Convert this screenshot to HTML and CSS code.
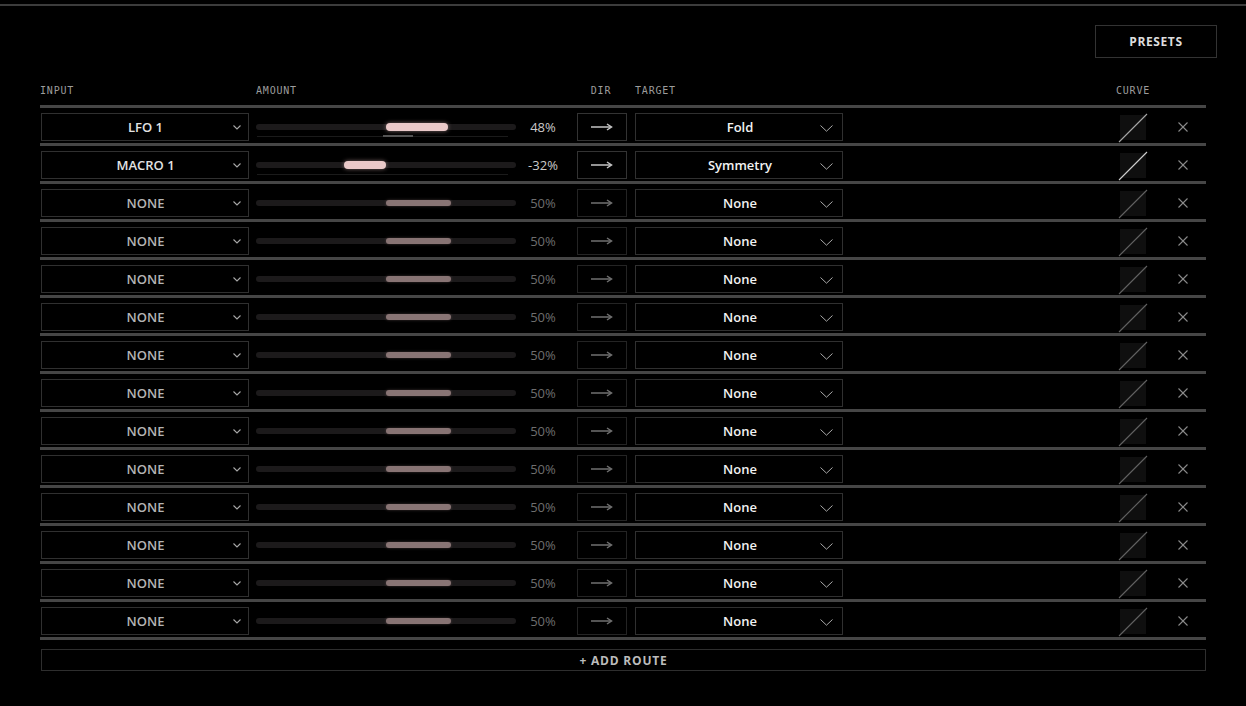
FILE: index.html
```html
<!DOCTYPE html>
<html lang="en">
<head>
<meta charset="utf-8">
<title>Mod Matrix</title>
<link rel="stylesheet" href="styles.css">
</head>
<body>
<div class="app">
  <div class="toolbar">
    <button class="btn-presets">PRESETS</button>
  </div>

  <div class="matrix">
    <div class="grid head">
      <div class="lbl">INPUT</div>
      <div class="lbl">AMOUNT</div>
      <div></div>
      <div class="lbl center">DIR</div>
      <div class="lbl">TARGET</div>
      <div></div>
      <div class="lbl center">CURVE</div>
      <div></div>
    </div>

    <div class="rows">
      <!-- route 1 -->
      <div class="grid route active">
        <div class="sel input"><span>LFO 1</span><svg class="chev-s" width="8" height="5" viewBox="0 0 8 5"><polyline points="0.5,0.5 4,4 7.5,0.5"/></svg></div>
        <div class="slider"><div class="track"></div><div class="fill" style="left:50%;width:24%"></div><div class="under"></div><div class="mark"></div></div>
        <div class="pct">48%</div>
        <div class="dir"><svg width="22" height="8" viewBox="0 0 22 8"><line x1="0" y1="4" x2="20" y2="4"/><polyline points="16,1 20.5,4 16,7"/></svg></div>
        <div class="sel target"><span>Fold</span><svg class="chev-l" width="13" height="7" viewBox="0 0 13 7"><polyline points="0.5,0.5 6.5,6.2 12.5,0.5"/></svg></div>
        <div></div>
        <div class="curve c1"><svg viewBox="0 0 26 25"><line x1="-1" y1="27" x2="27" y2="-1"/></svg></div>
        <div class="del"><svg width="10" height="10" viewBox="0 0 10 10"><line x1="0.5" y1="0.5" x2="9.5" y2="9.5"/><line x1="9.5" y1="0.5" x2="0.5" y2="9.5"/></svg></div>
      </div>
      <!-- route 2 -->
      <div class="grid route active">
        <div class="sel input"><span>MACRO 1</span><svg class="chev-s" width="8" height="5" viewBox="0 0 8 5"><polyline points="0.5,0.5 4,4 7.5,0.5"/></svg></div>
        <div class="slider"><div class="track"></div><div class="fill" style="left:34%;width:16%"></div><div class="under"></div></div>
        <div class="pct">-32%</div>
        <div class="dir"><svg width="22" height="8" viewBox="0 0 22 8"><line x1="0" y1="4" x2="20" y2="4"/><polyline points="16,1 20.5,4 16,7"/></svg></div>
        <div class="sel target"><span>Symmetry</span><svg class="chev-l" width="13" height="7" viewBox="0 0 13 7"><polyline points="0.5,0.5 6.5,6.2 12.5,0.5"/></svg></div>
        <div></div>
        <div class="curve c2"><svg viewBox="0 0 26 25"><line x1="-1" y1="27" x2="27" y2="-1"/></svg></div>
        <div class="del"><svg width="10" height="10" viewBox="0 0 10 10"><line x1="0.5" y1="0.5" x2="9.5" y2="9.5"/><line x1="9.5" y1="0.5" x2="0.5" y2="9.5"/></svg></div>
      </div>
      <!-- route 3 -->
      <div class="grid route">
        <div class="sel input"><span>NONE</span><svg class="chev-s" width="8" height="5" viewBox="0 0 8 5"><polyline points="0.5,0.5 4,4 7.5,0.5"/></svg></div>
        <div class="slider"><div class="track"></div><div class="fill" style="left:50%;width:25%"></div></div>
        <div class="pct">50%</div>
        <div class="dir"><svg width="22" height="8" viewBox="0 0 22 8"><line x1="0" y1="4" x2="20" y2="4"/><polyline points="16,1 20.5,4 16,7"/></svg></div>
        <div class="sel target"><span>None</span><svg class="chev-l" width="13" height="7" viewBox="0 0 13 7"><polyline points="0.5,0.5 6.5,6.2 12.5,0.5"/></svg></div>
        <div></div>
        <div class="curve"><svg viewBox="0 0 26 25"><line x1="-1" y1="27" x2="27" y2="-1"/></svg></div>
        <div class="del"><svg width="10" height="10" viewBox="0 0 10 10"><line x1="0.5" y1="0.5" x2="9.5" y2="9.5"/><line x1="9.5" y1="0.5" x2="0.5" y2="9.5"/></svg></div>
      </div>
      <!-- route 4 -->
      <div class="grid route">
        <div class="sel input"><span>NONE</span><svg class="chev-s" width="8" height="5" viewBox="0 0 8 5"><polyline points="0.5,0.5 4,4 7.5,0.5"/></svg></div>
        <div class="slider"><div class="track"></div><div class="fill" style="left:50%;width:25%"></div></div>
        <div class="pct">50%</div>
        <div class="dir"><svg width="22" height="8" viewBox="0 0 22 8"><line x1="0" y1="4" x2="20" y2="4"/><polyline points="16,1 20.5,4 16,7"/></svg></div>
        <div class="sel target"><span>None</span><svg class="chev-l" width="13" height="7" viewBox="0 0 13 7"><polyline points="0.5,0.5 6.5,6.2 12.5,0.5"/></svg></div>
        <div></div>
        <div class="curve"><svg viewBox="0 0 26 25"><line x1="-1" y1="27" x2="27" y2="-1"/></svg></div>
        <div class="del"><svg width="10" height="10" viewBox="0 0 10 10"><line x1="0.5" y1="0.5" x2="9.5" y2="9.5"/><line x1="9.5" y1="0.5" x2="0.5" y2="9.5"/></svg></div>
      </div>
      <!-- route 5 -->
      <div class="grid route">
        <div class="sel input"><span>NONE</span><svg class="chev-s" width="8" height="5" viewBox="0 0 8 5"><polyline points="0.5,0.5 4,4 7.5,0.5"/></svg></div>
        <div class="slider"><div class="track"></div><div class="fill" style="left:50%;width:25%"></div></div>
        <div class="pct">50%</div>
        <div class="dir"><svg width="22" height="8" viewBox="0 0 22 8"><line x1="0" y1="4" x2="20" y2="4"/><polyline points="16,1 20.5,4 16,7"/></svg></div>
        <div class="sel target"><span>None</span><svg class="chev-l" width="13" height="7" viewBox="0 0 13 7"><polyline points="0.5,0.5 6.5,6.2 12.5,0.5"/></svg></div>
        <div></div>
        <div class="curve"><svg viewBox="0 0 26 25"><line x1="-1" y1="27" x2="27" y2="-1"/></svg></div>
        <div class="del"><svg width="10" height="10" viewBox="0 0 10 10"><line x1="0.5" y1="0.5" x2="9.5" y2="9.5"/><line x1="9.5" y1="0.5" x2="0.5" y2="9.5"/></svg></div>
      </div>
      <!-- route 6 -->
      <div class="grid route">
        <div class="sel input"><span>NONE</span><svg class="chev-s" width="8" height="5" viewBox="0 0 8 5"><polyline points="0.5,0.5 4,4 7.5,0.5"/></svg></div>
        <div class="slider"><div class="track"></div><div class="fill" style="left:50%;width:25%"></div></div>
        <div class="pct">50%</div>
        <div class="dir"><svg width="22" height="8" viewBox="0 0 22 8"><line x1="0" y1="4" x2="20" y2="4"/><polyline points="16,1 20.5,4 16,7"/></svg></div>
        <div class="sel target"><span>None</span><svg class="chev-l" width="13" height="7" viewBox="0 0 13 7"><polyline points="0.5,0.5 6.5,6.2 12.5,0.5"/></svg></div>
        <div></div>
        <div class="curve"><svg viewBox="0 0 26 25"><line x1="-1" y1="27" x2="27" y2="-1"/></svg></div>
        <div class="del"><svg width="10" height="10" viewBox="0 0 10 10"><line x1="0.5" y1="0.5" x2="9.5" y2="9.5"/><line x1="9.5" y1="0.5" x2="0.5" y2="9.5"/></svg></div>
      </div>
      <!-- route 7 -->
      <div class="grid route">
        <div class="sel input"><span>NONE</span><svg class="chev-s" width="8" height="5" viewBox="0 0 8 5"><polyline points="0.5,0.5 4,4 7.5,0.5"/></svg></div>
        <div class="slider"><div class="track"></div><div class="fill" style="left:50%;width:25%"></div></div>
        <div class="pct">50%</div>
        <div class="dir"><svg width="22" height="8" viewBox="0 0 22 8"><line x1="0" y1="4" x2="20" y2="4"/><polyline points="16,1 20.5,4 16,7"/></svg></div>
        <div class="sel target"><span>None</span><svg class="chev-l" width="13" height="7" viewBox="0 0 13 7"><polyline points="0.5,0.5 6.5,6.2 12.5,0.5"/></svg></div>
        <div></div>
        <div class="curve"><svg viewBox="0 0 26 25"><line x1="-1" y1="27" x2="27" y2="-1"/></svg></div>
        <div class="del"><svg width="10" height="10" viewBox="0 0 10 10"><line x1="0.5" y1="0.5" x2="9.5" y2="9.5"/><line x1="9.5" y1="0.5" x2="0.5" y2="9.5"/></svg></div>
      </div>
      <!-- route 8 -->
      <div class="grid route">
        <div class="sel input"><span>NONE</span><svg class="chev-s" width="8" height="5" viewBox="0 0 8 5"><polyline points="0.5,0.5 4,4 7.5,0.5"/></svg></div>
        <div class="slider"><div class="track"></div><div class="fill" style="left:50%;width:25%"></div></div>
        <div class="pct">50%</div>
        <div class="dir"><svg width="22" height="8" viewBox="0 0 22 8"><line x1="0" y1="4" x2="20" y2="4"/><polyline points="16,1 20.5,4 16,7"/></svg></div>
        <div class="sel target"><span>None</span><svg class="chev-l" width="13" height="7" viewBox="0 0 13 7"><polyline points="0.5,0.5 6.5,6.2 12.5,0.5"/></svg></div>
        <div></div>
        <div class="curve"><svg viewBox="0 0 26 25"><line x1="-1" y1="27" x2="27" y2="-1"/></svg></div>
        <div class="del"><svg width="10" height="10" viewBox="0 0 10 10"><line x1="0.5" y1="0.5" x2="9.5" y2="9.5"/><line x1="9.5" y1="0.5" x2="0.5" y2="9.5"/></svg></div>
      </div>
      <!-- route 9 -->
      <div class="grid route">
        <div class="sel input"><span>NONE</span><svg class="chev-s" width="8" height="5" viewBox="0 0 8 5"><polyline points="0.5,0.5 4,4 7.5,0.5"/></svg></div>
        <div class="slider"><div class="track"></div><div class="fill" style="left:50%;width:25%"></div></div>
        <div class="pct">50%</div>
        <div class="dir"><svg width="22" height="8" viewBox="0 0 22 8"><line x1="0" y1="4" x2="20" y2="4"/><polyline points="16,1 20.5,4 16,7"/></svg></div>
        <div class="sel target"><span>None</span><svg class="chev-l" width="13" height="7" viewBox="0 0 13 7"><polyline points="0.5,0.5 6.5,6.2 12.5,0.5"/></svg></div>
        <div></div>
        <div class="curve"><svg viewBox="0 0 26 25"><line x1="-1" y1="27" x2="27" y2="-1"/></svg></div>
        <div class="del"><svg width="10" height="10" viewBox="0 0 10 10"><line x1="0.5" y1="0.5" x2="9.5" y2="9.5"/><line x1="9.5" y1="0.5" x2="0.5" y2="9.5"/></svg></div>
      </div>
      <!-- route 10 -->
      <div class="grid route">
        <div class="sel input"><span>NONE</span><svg class="chev-s" width="8" height="5" viewBox="0 0 8 5"><polyline points="0.5,0.5 4,4 7.5,0.5"/></svg></div>
        <div class="slider"><div class="track"></div><div class="fill" style="left:50%;width:25%"></div></div>
        <div class="pct">50%</div>
        <div class="dir"><svg width="22" height="8" viewBox="0 0 22 8"><line x1="0" y1="4" x2="20" y2="4"/><polyline points="16,1 20.5,4 16,7"/></svg></div>
        <div class="sel target"><span>None</span><svg class="chev-l" width="13" height="7" viewBox="0 0 13 7"><polyline points="0.5,0.5 6.5,6.2 12.5,0.5"/></svg></div>
        <div></div>
        <div class="curve"><svg viewBox="0 0 26 25"><line x1="-1" y1="27" x2="27" y2="-1"/></svg></div>
        <div class="del"><svg width="10" height="10" viewBox="0 0 10 10"><line x1="0.5" y1="0.5" x2="9.5" y2="9.5"/><line x1="9.5" y1="0.5" x2="0.5" y2="9.5"/></svg></div>
      </div>
      <!-- route 11 -->
      <div class="grid route">
        <div class="sel input"><span>NONE</span><svg class="chev-s" width="8" height="5" viewBox="0 0 8 5"><polyline points="0.5,0.5 4,4 7.5,0.5"/></svg></div>
        <div class="slider"><div class="track"></div><div class="fill" style="left:50%;width:25%"></div></div>
        <div class="pct">50%</div>
        <div class="dir"><svg width="22" height="8" viewBox="0 0 22 8"><line x1="0" y1="4" x2="20" y2="4"/><polyline points="16,1 20.5,4 16,7"/></svg></div>
        <div class="sel target"><span>None</span><svg class="chev-l" width="13" height="7" viewBox="0 0 13 7"><polyline points="0.5,0.5 6.5,6.2 12.5,0.5"/></svg></div>
        <div></div>
        <div class="curve"><svg viewBox="0 0 26 25"><line x1="-1" y1="27" x2="27" y2="-1"/></svg></div>
        <div class="del"><svg width="10" height="10" viewBox="0 0 10 10"><line x1="0.5" y1="0.5" x2="9.5" y2="9.5"/><line x1="9.5" y1="0.5" x2="0.5" y2="9.5"/></svg></div>
      </div>
      <!-- route 12 -->
      <div class="grid route">
        <div class="sel input"><span>NONE</span><svg class="chev-s" width="8" height="5" viewBox="0 0 8 5"><polyline points="0.5,0.5 4,4 7.5,0.5"/></svg></div>
        <div class="slider"><div class="track"></div><div class="fill" style="left:50%;width:25%"></div></div>
        <div class="pct">50%</div>
        <div class="dir"><svg width="22" height="8" viewBox="0 0 22 8"><line x1="0" y1="4" x2="20" y2="4"/><polyline points="16,1 20.5,4 16,7"/></svg></div>
        <div class="sel target"><span>None</span><svg class="chev-l" width="13" height="7" viewBox="0 0 13 7"><polyline points="0.5,0.5 6.5,6.2 12.5,0.5"/></svg></div>
        <div></div>
        <div class="curve"><svg viewBox="0 0 26 25"><line x1="-1" y1="27" x2="27" y2="-1"/></svg></div>
        <div class="del"><svg width="10" height="10" viewBox="0 0 10 10"><line x1="0.5" y1="0.5" x2="9.5" y2="9.5"/><line x1="9.5" y1="0.5" x2="0.5" y2="9.5"/></svg></div>
      </div>
      <!-- route 13 -->
      <div class="grid route">
        <div class="sel input"><span>NONE</span><svg class="chev-s" width="8" height="5" viewBox="0 0 8 5"><polyline points="0.5,0.5 4,4 7.5,0.5"/></svg></div>
        <div class="slider"><div class="track"></div><div class="fill" style="left:50%;width:25%"></div></div>
        <div class="pct">50%</div>
        <div class="dir"><svg width="22" height="8" viewBox="0 0 22 8"><line x1="0" y1="4" x2="20" y2="4"/><polyline points="16,1 20.5,4 16,7"/></svg></div>
        <div class="sel target"><span>None</span><svg class="chev-l" width="13" height="7" viewBox="0 0 13 7"><polyline points="0.5,0.5 6.5,6.2 12.5,0.5"/></svg></div>
        <div></div>
        <div class="curve"><svg viewBox="0 0 26 25"><line x1="-1" y1="27" x2="27" y2="-1"/></svg></div>
        <div class="del"><svg width="10" height="10" viewBox="0 0 10 10"><line x1="0.5" y1="0.5" x2="9.5" y2="9.5"/><line x1="9.5" y1="0.5" x2="0.5" y2="9.5"/></svg></div>
      </div>
      <!-- route 14 -->
      <div class="grid route">
        <div class="sel input"><span>NONE</span><svg class="chev-s" width="8" height="5" viewBox="0 0 8 5"><polyline points="0.5,0.5 4,4 7.5,0.5"/></svg></div>
        <div class="slider"><div class="track"></div><div class="fill" style="left:50%;width:25%"></div></div>
        <div class="pct">50%</div>
        <div class="dir"><svg width="22" height="8" viewBox="0 0 22 8"><line x1="0" y1="4" x2="20" y2="4"/><polyline points="16,1 20.5,4 16,7"/></svg></div>
        <div class="sel target"><span>None</span><svg class="chev-l" width="13" height="7" viewBox="0 0 13 7"><polyline points="0.5,0.5 6.5,6.2 12.5,0.5"/></svg></div>
        <div></div>
        <div class="curve"><svg viewBox="0 0 26 25"><line x1="-1" y1="27" x2="27" y2="-1"/></svg></div>
        <div class="del"><svg width="10" height="10" viewBox="0 0 10 10"><line x1="0.5" y1="0.5" x2="9.5" y2="9.5"/><line x1="9.5" y1="0.5" x2="0.5" y2="9.5"/></svg></div>
      </div>
    </div>

    <button class="btn-add">+ ADD ROUTE</button>
  </div>
</div>
</body>
</html>
```

FILE: styles.css
```css
* { box-sizing: border-box; }

html, body {
  margin: 0;
  padding: 0;
  background: #000;
}

body {
  font-family: "Open Sans", "Liberation Sans", sans-serif;
  color: #ddd;
  height: 706px;
  overflow: hidden;
}

.app {
  margin-top: 4px;
  border-top: 2px solid #3c3c3c;
}

/* top toolbar */
.toolbar {
  display: flex;
  justify-content: flex-end;
  padding: 19px 29px 0 0;
}

.btn-presets {
  width: 122px;
  height: 33px;
  background: #000;
  border: 1px solid #333;
  color: #ddd;
  font-family: "Open Sans", "Liberation Sans", sans-serif;
  font-weight: 700;
  font-size: 12px;
  letter-spacing: 0.6px;
  padding: 0;
}

/* matrix */
.matrix {
  margin: 26px 40px 0 40px;
}

.grid {
  display: grid;
  grid-template-columns: 208px 260px 47px 50px 208px 1fr 26px 53px;
  column-gap: 7px;
  padding-left: 1px;
  align-items: center;
}

.head {
  height: 14px;
  margin-bottom: 7px;
  padding-left: 0;
}

.lbl {
  font-family: "DejaVu Sans Mono", "Liberation Mono", monospace;
  font-size: 10px;
  line-height: 14px;
  letter-spacing: 0.8px;
  color: #9c9c9c;
  white-space: nowrap;
}

.lbl.center {
  display: flex;
  justify-content: center;
}

.head .lbl:nth-child(2) { margin-left: 1px; }
.head .lbl:nth-child(5) { margin-left: 2px; }

.rows {
  border-bottom: 3px solid #464646;
}

.route {
  border-top: 3px solid #464646;
  padding-top: 5px;
  padding-bottom: 2px;
  height: 38px;
}

/* select boxes */
.sel {
  height: 28px;
  border: 1px solid #303030;
  display: flex;
  align-items: center;
  justify-content: center;
  position: relative;
  font-weight: 600;
  font-size: 13px;
}

.sel.input span {
  color: #b4b4b4;
  margin-left: 1px;
}
.route.active .sel.input span { color: #e2e2e2; }

.sel.target {
  margin-left: 1px;
  width: 208px;
}

.sel.target span {
  color: #f2f2f2;
  margin-left: 2px;
}

.chev-s {
  position: absolute;
  right: 7px;
  top: 11px;
  fill: none;
  stroke: #a8a8a8;
  stroke-width: 1.1;
}

.chev-l {
  position: absolute;
  right: 9px;
  top: 11px;
  fill: none;
  stroke: #a8a8a8;
  stroke-width: 1;
}

/* bipolar amount slider */
.slider {
  position: relative;
  height: 28px;
}

.track {
  position: absolute;
  left: 0;
  right: 0;
  top: 11px;
  height: 6px;
  border-radius: 3px;
  background: #1c1a1b;
}

.fill {
  position: absolute;
  top: 11px;
  height: 6px;
  border-radius: 3px;
  background: #887474;
  box-shadow: 0 0 3px rgba(140, 116, 116, 0.45);
}

.route.active .fill {
  top: 10px;
  height: 8px;
  border-radius: 4px;
  background: #eac9c9;
  box-shadow: 0 0 4px rgba(240, 200, 200, 0.5);
}

.under {
  position: absolute;
  left: 1px;
  width: 251px;
  top: 23px;
  height: 1px;
  background: #1b1b1b;
}

.mark {
  position: absolute;
  left: 127px;
  width: 30px;
  top: 22px;
  height: 2px;
  background: #545454;
}

.pct {
  text-align: center;
  padding-right: 7px;
  font-size: 13px;
  color: #6e6e6e;
  white-space: nowrap;
}
.route.active .pct { color: #cacaca; }

/* direction toggle */
.dir {
  height: 28px;
  border: 1px solid #242424;
  display: flex;
  align-items: center;
  justify-content: center;
}
.dir svg {
  fill: none;
  stroke: #707070;
  stroke-width: 1.5;
}
.route.active .dir { border-color: #333; }
.route.active .dir svg { stroke: #c4c4c4; }

/* curve preview */
.curve {
  width: 26px;
  height: 25px;
  background: #0f0f0f;
  position: relative;
}
.curve svg {
  position: absolute;
  inset: 0;
  width: 26px;
  height: 25px;
  overflow: visible;
  stroke: #626262;
  stroke-width: 1.1;
}
.curve.c1 svg { stroke: #a8a8a8; }
.curve.c2 svg { stroke: #d0d0d0; }

.del {
  display: flex;
  justify-content: flex-end;
  padding-right: 18px;
}
.del svg {
  stroke: #8a8a8a;
  stroke-width: 1.1;
}

/* add route */
.btn-add {
  display: block;
  width: calc(100% - 1px);
  margin: 9px 0 0 1px;
  height: 22px;
  background: #000;
  border: 1px solid #2e2e2e;
  color: #bcbcbc;
  font-family: "Open Sans", "Liberation Sans", sans-serif;
  font-weight: 700;
  font-size: 12px;
  letter-spacing: 0.8px;
  padding: 0;
}
```
